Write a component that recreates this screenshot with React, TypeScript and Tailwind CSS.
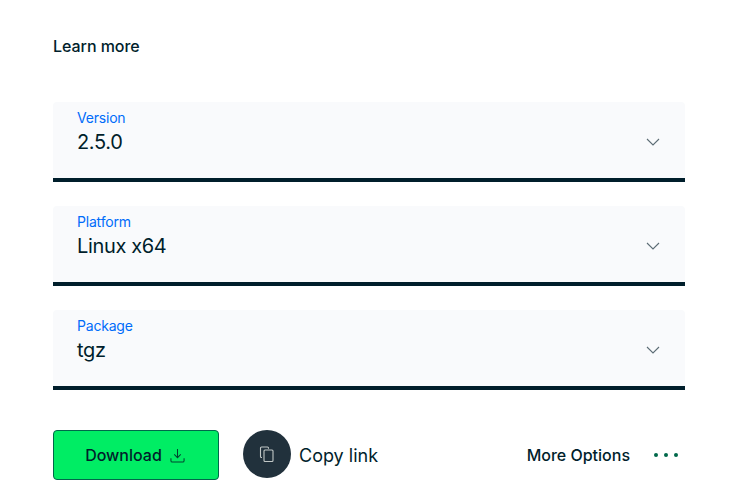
const fields = [
  { label: "Version", value: "2.5.0" },
  { label: "Platform", value: "Linux x64" },
  { label: "Package", value: "tgz" },
];

function Chevron() {
  return (
    <svg width="14" height="8" viewBox="0 0 14 8" fill="none" className="mr-[25px] mt-[3px] shrink-0">
      <path d="M1 1l6 6 6-6" stroke="#5c6c75" strokeWidth="1.1" />
    </svg>
  );
}

function Field({ label, value }: { label: string; value: string }) {
  return (
    <div className="flex h-20 items-center justify-between rounded-t-[4px] border-b-4 border-[#001e2b] bg-[#f9fafc] pl-6">
      <div className="flex h-full flex-col pt-[7px]">
        <span className="text-[14px] leading-[18px] tracking-[-0.2px] text-[#006cfa]">{label}</span>
        <span className="mt-[2px] text-xl leading-[26px] tracking-[-0.35px] text-[#001e2b]">{value}</span>
      </div>
      <Chevron />
    </div>
  );
}

export default function App() {
  return (
    <div className="h-[496px] w-[743px] overflow-hidden bg-white px-[53px] pr-[58px] pt-[36px] font-['Inter',sans-serif] text-[#001e2b]">
      <a className="block text-base leading-[20px] font-medium tracking-[-0.05px]">Learn more</a>
      <div className="mt-[46px] flex flex-col gap-6">
        {fields.map((f) => (
          <Field key={f.label} {...f} />
        ))}
      </div>
      <div className="mt-10 flex items-start">
        <button className="flex h-[50px] w-[166px] items-center justify-center gap-2 rounded-[4px] border border-[#00684a] bg-[#00ed64] pr-[2px] text-base font-medium">
          Download
          <svg width="15" height="15" viewBox="0 0 16 16" fill="none" stroke="#00442f" strokeWidth="1.1">
            <path d="M8 1v9M4.5 6.8 8 10.3l3.5-3.5M1 11v2.5a1.5 1.5 0 0 0 1.5 1.5h11a1.5 1.5 0 0 0 1.5-1.5V11" />
          </svg>
        </button>
        <div className="ml-6 flex items-center">
          <div className="flex h-12 w-12 items-center justify-center rounded-full bg-[#21313c]">
            <svg width="16" height="16" viewBox="0 0 16 16" fill="none" stroke="#c1c7c6" strokeWidth="1.1">
              <path d="M3 11.5H2.5a1 1 0 0 1-1-1V2a1 1 0 0 1 1-1h6a1 1 0 0 1 1 1v.8" />
              <rect x="5" y="4" width="9" height="11.5" rx="1" />
            </svg>
          </div>
          <span className="ml-2 mt-[4px] text-lg">Copy link</span>
        </div>
        <div className="ml-auto flex h-[50px] items-center">
          <span className="text-base font-medium">More Options</span>
          <div className="ml-[24px] mr-[7px] flex gap-[6px]">
            <span className="h-1 w-1 rounded-full bg-[#00684a]" />
            <span className="h-1 w-1 rounded-full bg-[#00684a]" />
            <span className="h-1 w-1 rounded-full bg-[#00684a]" />
          </div>
        </div>
      </div>
    </div>
  );
}
